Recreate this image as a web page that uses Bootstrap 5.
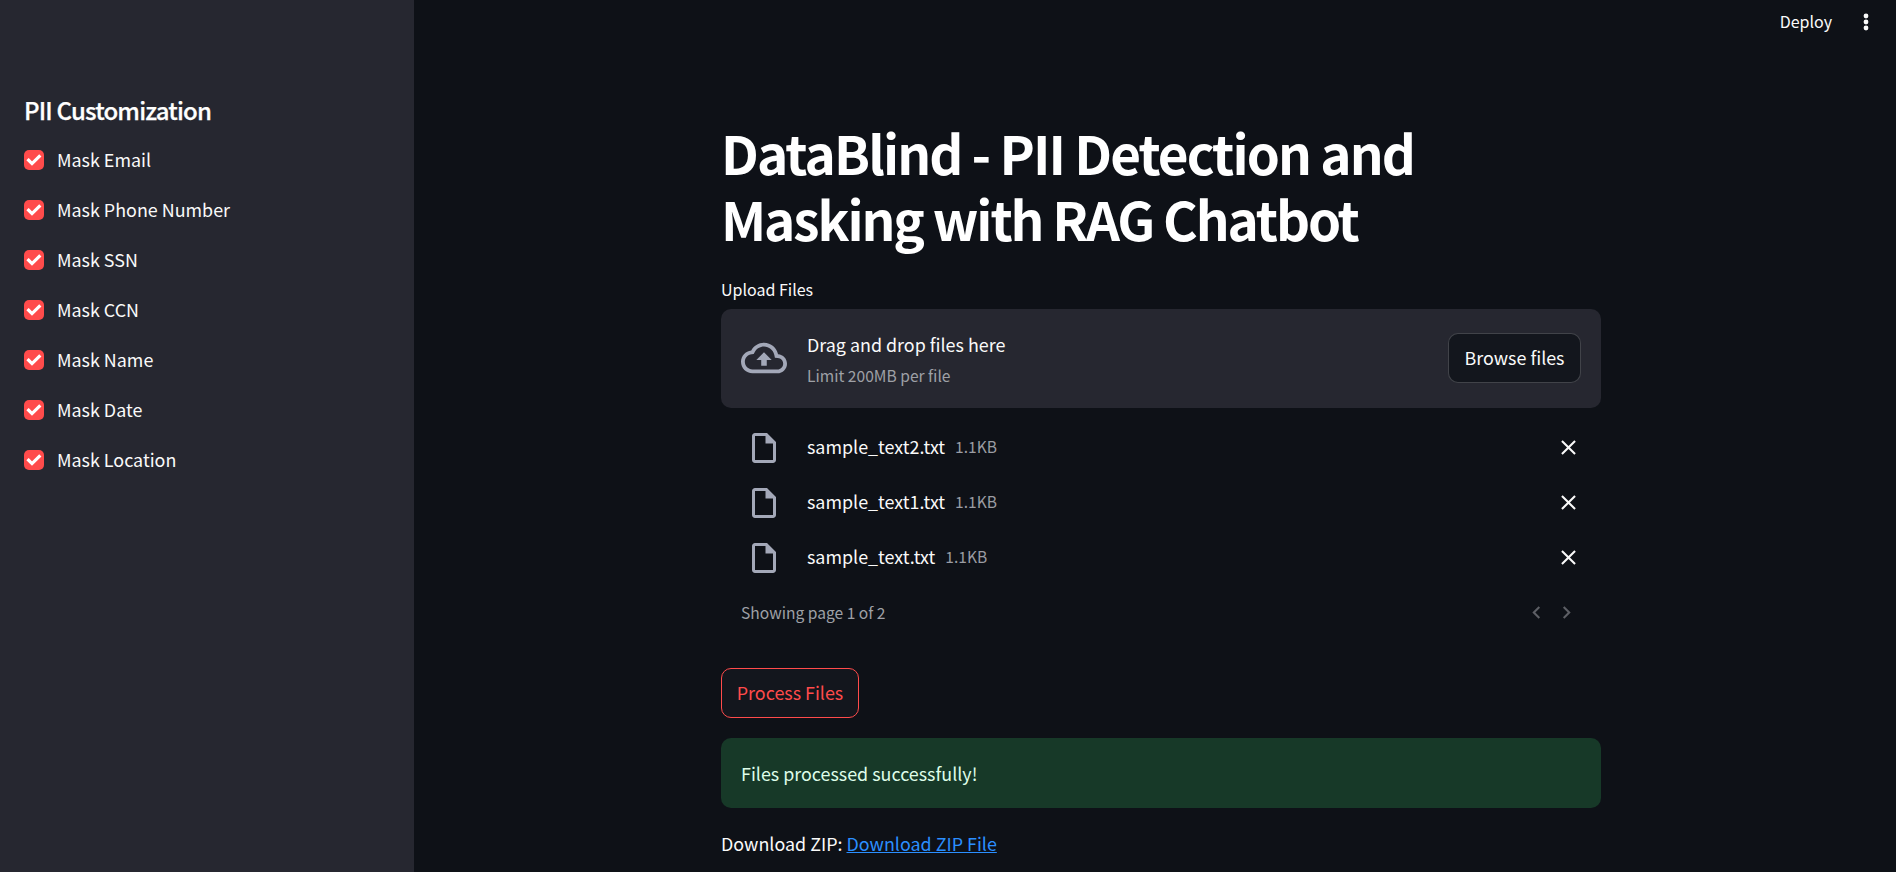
<!DOCTYPE html>
<html lang="en" data-bs-theme="dark">
<head>
<meta charset="utf-8">
<title>DataBlind</title>
<link href="https://cdn.jsdelivr.net/npm/bootstrap@5.3.0/dist/css/bootstrap.min.css" rel="stylesheet">
<style>
html,body{height:100%;}
body{background:#0e1117;color:#fafafa;font-family:"Noto Sans CJK SC","Noto Sans CJK JP","Open Sans",sans-serif;font-size:20px;line-height:1.6;overflow:hidden;}
.app-shell{height:872px;}
.side-pane{width:414px;flex:none;background:#262730;padding:92px 24px 0;}
.side-title{font-size:24px;font-weight:500;line-height:36px;margin:0 0 17px;letter-spacing:-.82px;-webkit-text-stroke:.25px #fafafa;}
.mask-list{gap:20px;}
.mask-item{height:30px;margin:0;padding:0;gap:13px;}
.mask-item .form-check-input{width:20px;height:20px;margin:0;float:none;flex:none;background-color:#ff4b4b;border:0;border-radius:5px;}
.mask-item .form-check-input:checked[type=checkbox]{--bs-form-check-bg-image:url("data:image/svg+xml,%3csvg xmlns='http://www.w3.org/2000/svg' viewBox='0 0 20 20'%3e%3cpath fill='none' stroke='%23fff' stroke-linecap='square' stroke-width='3.2' d='M4.6 10.2l3.4 3.4 7.2-7.2'/%3e%3c/svg%3e");}
.mask-item .form-check-label{font-size:17.9px;line-height:28px;padding-bottom:2px;opacity:1;}
.main-pane{min-width:0;}
.top-strip{height:44px;padding-right:24px;gap:28px;font-size:16px;}
.top-strip svg{display:block;}
.page-col{width:880px;margin:0 295px 0 auto;padding-top:75px;}
.page-title{font-size:53px;font-weight:700;line-height:66px;margin:0 0 27px;letter-spacing:-1.9px;}
.title-second{letter-spacing:-2.1px;}
.up-label{font-size:16px;line-height:22px;margin-bottom:9px;}
.drop-box{height:99px;background:#262730;border-radius:10px;padding:0 20px;gap:20px;}
.drop-box>svg{margin-bottom:2px;}
.drop-main{font-size:17.9px;line-height:24px;}
.drop-sub{font-size:15.6px;line-height:20px;color:#9ea0a6;margin-top:9px;}
.browse-btn{--bs-btn-bg:#13161d;--bs-btn-color:#fafafa;--bs-btn-border-color:rgba(250,250,250,.2);--bs-btn-hover-bg:#13161d;--bs-btn-hover-color:#fafafa;--bs-btn-hover-border-color:rgba(250,250,250,.2);--bs-btn-border-radius:10px;--bs-btn-font-size:17.9px;height:50px;width:133px;padding:0;line-height:1.4;margin-bottom:2px;}
.file-lines{padding-top:12px;}
.file-line{height:55px;padding:0 20px 0 25px;}
.file-ic{width:36px;height:36px;fill:#a3a8b8;flex:none;margin-right:25px;}
.file-nm{font-size:17.9px;line-height:24px;padding-bottom:3px;}
.file-sz{font-size:15.6px;line-height:24px;padding-bottom:3px;color:#9a9ca3;margin-left:10px;}
.x-ic{width:25px;height:25px;fill:#fafafa;display:block;}
.pager-line{height:55px;padding:0 21px 0 20px;font-size:15.6px;color:#9ea0a6;}
.pager-arrows{gap:5px;padding-right:1px;}
.pager-arrows svg{width:25px;height:25px;fill:#5d5f65;display:block;}
.run-btn{--bs-btn-bg:#13161d;--bs-btn-color:#ff4b4b;--bs-btn-border-color:#ff4b4b;--bs-btn-hover-bg:#13161d;--bs-btn-hover-color:#ff4b4b;--bs-btn-hover-border-color:#ff4b4b;--bs-btn-border-radius:10px;--bs-btn-font-size:17.9px;width:138px;height:50px;padding:0;margin-top:28px;line-height:1.4;}
.done-box{--bs-alert-bg:#173928;--bs-alert-color:#dffde9;--bs-alert-border-color:transparent;--bs-alert-border-radius:10px;--bs-alert-padding-x:20px;--bs-alert-padding-y:0;--bs-alert-margin-bottom:0;height:70px;margin-top:20px;border:0;font-size:17.9px;line-height:24px;}
.zip-line{font-size:17.9px;line-height:28px;margin-top:21px;}
.zip-line a{color:#2b8fff;}
</style>
</head>
<body>
<div class="app-shell d-flex">
  <aside class="side-pane">
    <h2 class="side-title">PII Customization</h2>
    <div class="mask-list d-flex flex-column">
      <div class="form-check mask-item d-flex align-items-center"><input class="form-check-input" type="checkbox" id="m1" checked><label class="form-check-label" for="m1">Mask Email</label></div>
      <div class="form-check mask-item d-flex align-items-center"><input class="form-check-input" type="checkbox" id="m2" checked><label class="form-check-label" for="m2">Mask Phone Number</label></div>
      <div class="form-check mask-item d-flex align-items-center"><input class="form-check-input" type="checkbox" id="m3" checked><label class="form-check-label" for="m3">Mask SSN</label></div>
      <div class="form-check mask-item d-flex align-items-center"><input class="form-check-input" type="checkbox" id="m4" checked><label class="form-check-label" for="m4">Mask CCN</label></div>
      <div class="form-check mask-item d-flex align-items-center"><input class="form-check-input" type="checkbox" id="m5" checked><label class="form-check-label" for="m5">Mask Name</label></div>
      <div class="form-check mask-item d-flex align-items-center"><input class="form-check-input" type="checkbox" id="m6" checked><label class="form-check-label" for="m6">Mask Date</label></div>
      <div class="form-check mask-item d-flex align-items-center"><input class="form-check-input" type="checkbox" id="m7" checked><label class="form-check-label" for="m7">Mask Location</label></div>
    </div>
  </aside>
  <main class="main-pane flex-grow-1">
    <div class="top-strip d-flex justify-content-end align-items-center">
      <span>Deploy</span>
      <svg width="12" height="24" viewBox="0 0 12 24" fill="#fafafa" aria-hidden="true"><circle cx="6" cy="6" r="2.4"/><circle cx="6" cy="12" r="2.4"/><circle cx="6" cy="18" r="2.4"/></svg>
    </div>
    <div class="page-col">
      <h1 class="page-title">DataBlind - PII Detection and<br><span class="title-second">Masking with RAG Chatbot</span></h1>
      <div class="up-label">Upload Files</div>
      <div class="drop-box d-flex align-items-center">
        <svg width="46" height="46" viewBox="0 0 24 24" fill="#a3a8b8" aria-hidden="true"><path d="M19.35 10.04C18.67 6.59 15.64 4 12 4 9.11 4 6.6 5.64 5.35 8.04 2.34 8.36 0 10.91 0 14c0 3.31 2.69 6 6 6h13c2.76 0 5-2.24 5-5 0-2.64-2.05-4.78-4.65-4.96zM19 18H6c-2.21 0-4-1.79-4-4 0-2.05 1.53-3.76 3.56-3.97l1.07-.11.5-.95C8.08 7.14 9.94 6 12 6c2.62 0 4.88 1.86 5.39 4.43l.3 1.5 1.53.11c1.56.1 2.78 1.41 2.78 2.96 0 1.65-1.35 3-3 3zM8 13h2.55v3h2.9v-3H16l-4-4z"/></svg>
        <div class="flex-grow-1">
          <div class="drop-main">Drag and drop files here</div>
          <div class="drop-sub">Limit 200MB per file</div>
        </div>
        <button type="button" class="btn browse-btn">Browse files</button>
      </div>
      <div class="file-lines">
        <div class="file-line d-flex align-items-center">
          <svg class="file-ic" viewBox="0 0 24 24" aria-hidden="true"><path d="M14 2H6c-1.1 0-1.99.9-1.99 2L4 20c0 1.1.89 2 1.99 2H18c1.1 0 2-.9 2-2V8l-6-6zM6 20V4h7v5h5v11H6z"/></svg>
          <span class="file-nm">sample_text2.txt</span><span class="file-sz flex-grow-1">1.1KB</span>
          <svg class="x-ic" viewBox="0 0 24 24" aria-hidden="true"><path d="M19 6.41L17.59 5 12 10.59 6.41 5 5 6.41 10.59 12 5 17.59 6.41 19 12 13.41 17.59 19 19 17.59 13.41 12z"/></svg>
        </div>
        <div class="file-line d-flex align-items-center">
          <svg class="file-ic" viewBox="0 0 24 24" aria-hidden="true"><path d="M14 2H6c-1.1 0-1.99.9-1.99 2L4 20c0 1.1.89 2 1.99 2H18c1.1 0 2-.9 2-2V8l-6-6zM6 20V4h7v5h5v11H6z"/></svg>
          <span class="file-nm">sample_text1.txt</span><span class="file-sz flex-grow-1">1.1KB</span>
          <svg class="x-ic" viewBox="0 0 24 24" aria-hidden="true"><path d="M19 6.41L17.59 5 12 10.59 6.41 5 5 6.41 10.59 12 5 17.59 6.41 19 12 13.41 17.59 19 19 17.59 13.41 12z"/></svg>
        </div>
        <div class="file-line d-flex align-items-center">
          <svg class="file-ic" viewBox="0 0 24 24" aria-hidden="true"><path d="M14 2H6c-1.1 0-1.99.9-1.99 2L4 20c0 1.1.89 2 1.99 2H18c1.1 0 2-.9 2-2V8l-6-6zM6 20V4h7v5h5v11H6z"/></svg>
          <span class="file-nm">sample_text.txt</span><span class="file-sz flex-grow-1">1.1KB</span>
          <svg class="x-ic" viewBox="0 0 24 24" aria-hidden="true"><path d="M19 6.41L17.59 5 12 10.59 6.41 5 5 6.41 10.59 12 5 17.59 6.41 19 12 13.41 17.59 19 19 17.59 13.41 12z"/></svg>
        </div>
        <div class="pager-line d-flex align-items-center justify-content-between">
          <span>Showing page 1 of 2</span>
          <span class="pager-arrows d-flex">
            <svg viewBox="0 0 24 24" aria-hidden="true"><path d="M15.41 7.41L14 6l-6 6 6 6 1.41-1.41L10.83 12z"/></svg>
            <svg viewBox="0 0 24 24" aria-hidden="true"><path d="M8.59 16.59L10 18l6-6-6-6-1.41 1.41L13.17 12z"/></svg>
          </span>
        </div>
      </div>
      <button type="button" class="btn run-btn d-block">Process Files</button>
      <div class="alert done-box d-flex align-items-center" role="alert">Files processed successfully!</div>
      <div class="zip-line">Download ZIP: <a href="#">Download ZIP File</a></div>
    </div>
  </main>
</div>
<script src="https://cdn.jsdelivr.net/npm/bootstrap@5.3.0/dist/js/bootstrap.bundle.min.js"></script>
</body>
</html>
